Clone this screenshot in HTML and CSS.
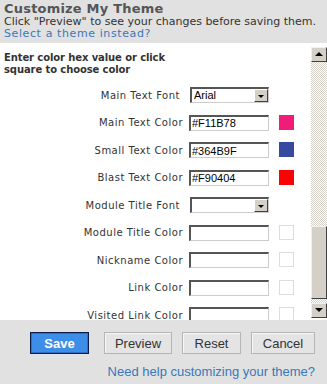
FILE: index.html
```html
<!DOCTYPE html>
<html>
<head>
  <meta charset="UTF-8">
  <title>Customize My Theme</title>
  <link rel="stylesheet" href="styles.css">
</head>
<body>
  <div class="header">
    <h1>Customize My Theme</h1>
    <p>Click "Preview" to see your changes before saving them.</p>
    <a href="#" class="link">Select a theme instead?</a>
  </div>

  <div class="panel">
    <div class="panel-content">
      <div class="intro">Enter color hex value or click<br>square to choose color</div>

      <div class="form-grid">
        <label class="field-label font-label">Main Text Font</label>
        <div class="select"><span class="select-value">Arial</span><span class="select-btn"></span></div>
        <span></span>

        <label class="field-label">Main Text Color</label>
        <input class="hex-input" type="text" value="#F11B78">
        <span class="swatch" style="background:#F11B78"></span>

        <label class="field-label">Small Text Color</label>
        <input class="hex-input" type="text" value="#364B9F">
        <span class="swatch" style="background:#364B9F"></span>

        <label class="field-label">Blast Text Color</label>
        <input class="hex-input" type="text" value="#F90404">
        <span class="swatch" style="background:#F90404"></span>

        <label class="field-label font-label">Module Title Font</label>
        <div class="select"><span class="select-value"></span><span class="select-btn"></span></div>
        <span></span>

        <label class="field-label">Module Title Color</label>
        <input class="hex-input" type="text" value="">
        <span class="swatch empty"></span>

        <label class="field-label">Nickname Color</label>
        <input class="hex-input" type="text" value="">
        <span class="swatch empty"></span>

        <label class="field-label">Link Color</label>
        <input class="hex-input" type="text" value="">
        <span class="swatch empty"></span>

        <label class="field-label">Visited Link Color</label>
        <input class="hex-input" type="text" value="">
        <span class="swatch empty"></span>
      </div>
    </div>

    <div class="scrollbar">
      <div class="sb-btn"><span class="arrow-up"></span></div>
      <div class="sb-track sb-track-top"></div>
      <div class="sb-thumb"></div>
      <div class="sb-track"></div>
      <div class="sb-btn"><span class="arrow-down"></span></div>
    </div>
  </div>

  <div class="footer">
    <div class="buttons">
      <button class="btn btn-save">Save</button>
      <button class="btn btn-preview">Preview</button>
      <button class="btn btn-reset">Reset</button>
      <button class="btn btn-cancel">Cancel</button>
    </div>
    <a href="#" class="help-link">Need help customizing your theme?</a>
  </div>
</body>
</html>
```

FILE: styles.css
```css
body {
  width: 327px;
  height: 384px;
  margin: 0;
  padding: 0;
  background: #e1e1e1;
  font-family: "DejaVu Sans", Verdana, sans-serif;
  color: #333;
  overflow: hidden;
}

.header {
  padding: 1px 4px 0 4px;
  height: 43px;
  box-sizing: border-box;
}

.header h1 {
  margin: 0;
  font-size: 13px;
  line-height: 15px;
  font-weight: bold;
  color: #555;
  letter-spacing: 0.2px;
}

.header p {
  margin: 0;
  font-size: 11px;
  line-height: 12px;
  color: #333;
}

.link {
  display: block;
  font-size: 11px;
  line-height: 12px;
  letter-spacing: 0.6px;
  color: #3a78b8;
  text-decoration: none;
}

.panel {
  display: flex;
  height: 277px;
  background: #fff;
}

.panel-content {
  flex: 1;
  overflow: hidden;
  padding: 9px 4px 0 4px;
}

.intro {
  font-size: 10px;
  line-height: 12px;
  font-weight: bold;
  color: #333;
  letter-spacing: -0.1px;
}

.form-grid {
  display: grid;
  grid-template-columns: 179px 80px 26px;
  grid-auto-rows: 16px;
  row-gap: 11.5px;
  column-gap: 6px;
  margin-top: 11px;
  align-items: center;
}

.field-label {
  font-size: 10px;
  letter-spacing: 0.5px;
  text-align: right;
  color: #333;
  white-space: nowrap;
}

.font-label {
  padding-right: 3px;
}

.hex-input {
  width: 80px;
  height: 16px;
  box-sizing: border-box;
  margin: 0;
  padding: 0 1px;
  border-style: solid;
  border-width: 2px 1px 1px 2px;
  border-color: #555 #ccc #ccc #555;
  font-family: "Liberation Sans", Arial, sans-serif;
  font-size: 11px;
  color: #000;
  background: #fff;
  outline: none;
}

.select {
  display: flex;
  width: 79px;
  height: 16px;
  box-sizing: border-box;
  margin-left: 1px;
  border-style: solid;
  border-width: 2px 1px 1px 2px;
  border-color: #555 #ccc #ccc #555;
  background: #fff;
}

.select-value {
  flex: 1;
  font-family: "Liberation Sans", Arial, sans-serif;
  font-size: 11px;
  line-height: 12px;
  padding-left: 2px;
  color: #000;
}

.select-btn {
  position: relative;
  width: 14px;
  background: #d4d0c8;
  border-style: solid;
  border-width: 1px;
  border-color: #fff #404040 #404040 #fff;
  box-sizing: border-box;
}

.select-btn::after {
  content: '';
  position: absolute;
  left: 3px;
  top: 5px;
  border-left: 3px solid transparent;
  border-right: 3px solid transparent;
  border-top: 3px solid #000;
}

.swatch {
  width: 15px;
  height: 15px;
  margin-left: 4px;
  align-self: start;
  box-sizing: border-box;
}

.swatch.empty {
  border: 1px solid #ddd;
}

/* classic scrollbar */
.scrollbar {
  width: 16px;
  margin-top: 4px;
  margin-bottom: 2px;
  display: flex;
  flex-direction: column;
}

.sb-btn {
  position: relative;
  height: 15px;
  background: #d4d0c8;
  border-style: solid;
  border-width: 1px;
  border-color: #f0f0f0 #404040 #404040 #f0f0f0;
  box-sizing: border-box;
}

.arrow-up,
.arrow-down {
  position: absolute;
  left: 3px;
  top: 4px;
  border-left: 4px solid transparent;
  border-right: 4px solid transparent;
}

.arrow-up {
  border-bottom: 4px solid #000;
}

.arrow-down {
  border-top: 4px solid #000;
}

.sb-track {
  flex: 1;
  background-color: #f4f3f0;
  background-image: repeating-conic-gradient(#d4d0c8 0 25%, #fff 0 50%);
  background-size: 2px 2px;
}

.sb-track-top {
  flex: none;
  height: 164px;
}

.sb-thumb {
  height: 73px;
  background: #d4d0c8;
  border-style: solid;
  border-width: 1px;
  border-color: #f0f0f0 #404040 #404040 #f0f0f0;
  box-sizing: border-box;
}

.footer {
  padding: 12px 12px 0 0;
  display: flex;
  flex-direction: column;
  align-items: flex-end;
}

.buttons {
  display: flex;
  gap: 10px;
}

.btn {
  height: 22px;
  margin: 0;
  padding: 0;
  font-family: "Liberation Sans", Arial, sans-serif;
  font-size: 13px;
  color: #333;
  background: #e4e4e4;
  border: 1px solid #b5b5b5;
  box-shadow: inset 1px 1px 0 #f6f6f6;
}

.btn-save {
  width: 59px;
  margin-right: 5px;
  background: #3d8ee9;
  color: #fff;
  font-weight: bold;
  border: 1px solid #0c1c44;
  box-shadow: inset 0 0 0 1px #2c6fc4;
}

.btn-preview { width: 68px; }
.btn-reset { width: 59px; }
.btn-cancel { width: 64px; }

.help-link {
  margin-top: 10px;
  font-family: "Liberation Sans", Arial, sans-serif;
  font-size: 13px;
  color: #3a78b8;
  text-decoration: none;
}
```
